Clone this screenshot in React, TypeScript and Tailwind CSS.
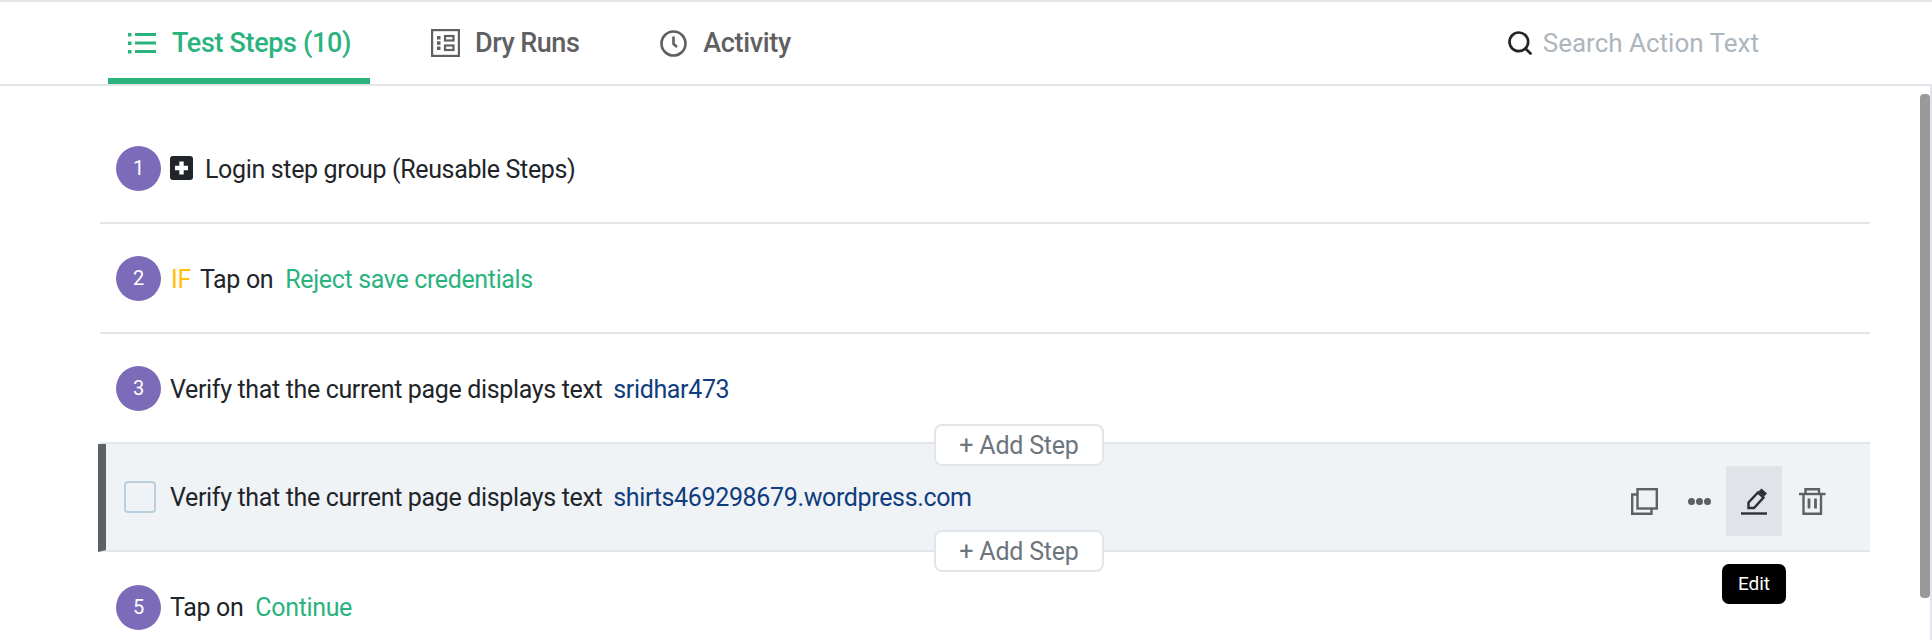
import { Search } from 'lucide-react';
import type { ReactNode } from 'react';

const GREEN = 'text-[#2bb37e]';
const NAVY = 'text-[#0f3d7e]';

function StepNumber({ n }: { n: number }) {
  return (
    <div className="w-[45px] h-[45px] rounded-full bg-[#7b6bb8] text-white text-[20px] flex items-center justify-center flex-shrink-0">
      {n}
    </div>
  );
}

function StepRow({ children, last }: { children: ReactNode; last?: boolean }) {
  return (
    <div className={`h-[110px] flex items-center pl-[16px] ${last ? '' : 'border-b-2 border-[#e2e5e9]'}`}>
      {children}
    </div>
  );
}

function ListIcon() {
  return (
    <svg width="28" height="22" viewBox="0 0 28 22" fill="#2bb37e" className="flex-shrink-0">
      <rect x="0" y="1" width="3.5" height="3.5" />
      <rect x="0" y="9.5" width="3.5" height="3.5" />
      <rect x="0" y="18" width="3.5" height="3.5" />
      <rect x="7" y="1" width="21" height="3" />
      <rect x="7" y="9.5" width="21" height="3" />
      <rect x="7" y="18" width="21" height="3" />
    </svg>
  );
}

function DryRunIcon() {
  return (
    <svg width="29" height="28" viewBox="0 0 29 28" fill="none" stroke="#5f6062" strokeWidth="2.2" className="flex-shrink-0">
      <rect x="1.1" y="1.1" width="26.8" height="25.8" />
      <rect x="14" y="7" width="8.5" height="4.5" />
      <rect x="14" y="16.5" width="8.5" height="4.5" />
      <rect x="6" y="7" width="3.5" height="3.5" fill="#5f6062" stroke="none" />
      <rect x="6" y="12.3" width="3.5" height="3.5" fill="#5f6062" stroke="none" />
      <rect x="6" y="17.5" width="3.5" height="3.5" fill="#5f6062" stroke="none" />
    </svg>
  );
}

function ClockIcon() {
  return (
    <svg width="27" height="27" viewBox="0 0 27 27" fill="none" stroke="#5f6062" strokeWidth="2.6" className="flex-shrink-0">
      <circle cx="13.5" cy="13.5" r="12" />
      <path d="M13.5 6.5v7.5l3.5 3" />
    </svg>
  );
}

function PlusBox() {
  return (
    <svg width="23" height="24" viewBox="0 0 23 24" className="flex-shrink-0">
      <rect width="23" height="24" rx="3" fill="#212529" />
      <path d="M11.5 5.5v13M5 12h13" stroke="#fff" strokeWidth="4.4" />
    </svg>
  );
}

function CopyIcon() {
  return (
    <svg width="27" height="27" viewBox="0 0 27 27" fill="none" stroke="#5f6062" strokeWidth="2.4">
      <rect x="6.5" y="1.2" width="19.3" height="19.3" />
      <path d="M6.5 6.5H1.2v19.3h19.3v-5.3" />
    </svg>
  );
}

function PencilIcon() {
  return (
    <svg width="27" height="27" viewBox="0 0 27 27" fill="none" stroke="#2b2f33" strokeWidth="2.4">
      <path d="M7.5 20v-5.5L17 4.5l5.5 5L13 20z" />
      <path d="M17.5 3.5 20.5 .5l5.5 5-3 3z" fill="#2b2f33" stroke="none" />
      <path d="M0 25.5h26" />
    </svg>
  );
}

function TrashIcon() {
  return (
    <svg width="27" height="27" viewBox="0 0 27 27" fill="none" stroke="#5f6062" strokeWidth="2.4">
      <path d="M0 6h26.5" />
      <path d="M6.5 6V1.2h13.5V6" />
      <path d="M4.5 6v19.8h17.5V6" />
      <path d="M10 10.5v10M16.5 10.5v10" strokeWidth="2.8" />
    </svg>
  );
}

function AddStep({ className }: { className: string }) {
  return (
    <button className={`absolute left-[934px] w-[170px] h-[42px] pt-[2px] bg-white border-2 border-[#e2e5e9] rounded-[8px] text-[25px] tracking-[-0.2px] text-[#6c757d] flex items-center justify-center ${className}`}>
      + Add Step
    </button>
  );
}

export default function App() {
  return (
    <div className="relative w-[1932px] h-[640px] overflow-hidden bg-white font-['Roboto',sans-serif] text-[25px] tracking-[-0.35px] text-[#212529] border-t-2 border-[#e2e5e9]">
      {/* Tabs */}
      <div className="h-[84px] flex items-stretch pl-[108px] pr-[173px] border-b-2 border-[#e2e5e9]">
        <div className="flex items-center gap-[16px] w-[262px] pl-[20px] border-y-[6px] border-t-transparent border-b-[#2bb37e]">
          <ListIcon />
          <span className={`font-medium text-[27px] tracking-[-0.35px] ${GREEN}`}>Test Steps (10)</span>
        </div>
        <div className="flex items-center gap-[15px] ml-[61px] border-y-[6px] border-transparent">
          <DryRunIcon />
          <span className="font-medium text-[27px] tracking-[-0.5px] text-[#5f6062]">Dry Runs</span>
        </div>
        <div className="flex items-center gap-[16px] ml-[81px] border-y-[6px] border-transparent">
          <ClockIcon />
          <span className="font-medium text-[27px] tracking-[-0.35px] text-[#5f6062]">Activity</span>
        </div>
        <div className="flex items-center gap-[9px] ml-auto border-y-[6px] border-transparent">
          <Search size={28} strokeWidth={2.3} color="#212529" />
          <span className="text-[26px] tracking-normal text-[#adb5bd]">Search Action Text</span>
        </div>
      </div>

      {/* Steps */}
      <div className="w-[1870px] pt-[28px] pl-[100px]">
        <StepRow>
          <StepNumber n={1} />
          <div className="ml-[9px]"><PlusBox /></div>
          <span className="ml-[12px] pt-[3px]">Login step group (Reusable Steps)</span>
        </StepRow>
        <StepRow>
          <StepNumber n={2} />
          <span className="ml-[10px] pt-[3px] text-[#ffc107]">IF</span>
          <span className="ml-[9px] pt-[3px]">Tap on</span>
          <span className={`ml-[12px] pt-[3px] ${GREEN}`}>Reject save credentials</span>
        </StepRow>
        <StepRow>
          <StepNumber n={3} />
          <span className="ml-[9px] pt-[3px]">Verify that the current page displays text</span>
          <span className={`ml-[11px] pt-[3px] ${NAVY}`}>sridhar473</span>
        </StepRow>
        <div className="-ml-[2px] h-[108px] flex items-center bg-[#f0f3f6] border-l-[8px] border-l-[#5f6062] border-b-2 border-[#e2e5e9]">
          <div className="w-[32px] h-[32px] ml-[18px] rounded-[4px] border-2 border-[#b9cfdd] flex-shrink-0" />
          <span className="ml-[14px] pt-[1px]">Verify that the current page displays text</span>
          <span className={`ml-[11px] pt-[1px] ${NAVY}`}>shirts469298679.wordpress.com</span>
          <div className="ml-auto mr-[44px] mt-[8px] flex items-center">
            <CopyIcon />
            <span className="ml-[30px] flex gap-[1px]">
              <i className="w-[7px] h-[7px] rounded-full bg-[#5f6062]" />
              <i className="w-[7px] h-[7px] rounded-full bg-[#5f6062]" />
              <i className="w-[7px] h-[7px] rounded-full bg-[#5f6062]" />
            </span>
            <div className="ml-[15px] w-[56px] h-[70px] bg-[#e0e3e8] flex items-center justify-center">
              <PencilIcon />
            </div>
            <div className="ml-[17px]"><TrashIcon /></div>
          </div>
        </div>
        <StepRow last>
          <StepNumber n={5} />
          <span className="ml-[9px] pt-[1px]">Tap on</span>
          <span className={`ml-[12px] pt-[1px] ${GREEN}`}>Continue</span>
        </StepRow>
      </div>

      <AddStep className="top-[422px]" />
      <AddStep className="top-[528px]" />

      {/* Tooltip */}
      <div className="absolute left-[1722px] top-[562px] w-[64px] h-[40px] bg-black text-white rounded-[7px] text-[19px] tracking-normal flex items-center justify-center">
        Edit
      </div>

      {/* Scrollbar */}
      <div className="absolute right-0 top-[84px] bottom-0 w-[2px] bg-[#e2e5e9]" />
      <div className="absolute left-[1920px] top-[92px] w-[10px] h-[504px] rounded-[4px] bg-[#999999]" />
    </div>
  );
}
